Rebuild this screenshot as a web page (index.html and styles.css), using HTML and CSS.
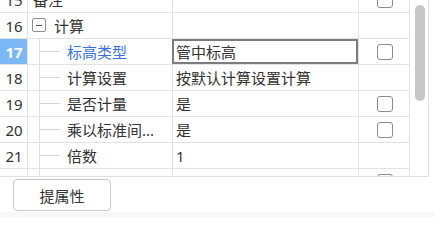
FILE: index.html
```html
<!DOCTYPE html>
<html>
<head>
<meta charset="utf-8">
<link rel="stylesheet" href="styles.css">
</head>
<body>
<div class="panel">
  <div class="grid">
    <div class="rows">
      <div class="row first">
        <div class="cell num">15</div>
        <div class="cell name top">备注</div>
        <div class="cell value"></div>
        <div class="cell check"><span class="box"></span></div>
      </div>
      <div class="row">
        <div class="cell num">16</div>
        <div class="cell name group"><span class="expander"><span class="minus"></span></span><span class="label">计算</span></div>
        <div class="cell value"></div>
        <div class="cell check"></div>
      </div>
      <div class="row selected">
        <div class="cell num">17</div>
        <div class="cell name child"><span class="indent"></span><span class="guide"></span><span class="conn"></span><span class="label">标高类型</span></div>
        <div class="cell value editing">管中标高</div>
        <div class="cell check"><span class="box"></span></div>
      </div>
      <div class="row">
        <div class="cell num">18</div>
        <div class="cell name child"><span class="indent"></span><span class="guide"></span><span class="conn"></span><span class="label">计算设置</span></div>
        <div class="cell value">按默认计算设置计算</div>
        <div class="cell check"></div>
      </div>
      <div class="row">
        <div class="cell num">19</div>
        <div class="cell name child"><span class="indent"></span><span class="guide"></span><span class="conn"></span><span class="label">是否计量</span></div>
        <div class="cell value">是</div>
        <div class="cell check"><span class="box"></span></div>
      </div>
      <div class="row">
        <div class="cell num">20</div>
        <div class="cell name child"><span class="indent"></span><span class="guide"></span><span class="conn"></span><span class="label">乘以标准间...</span></div>
        <div class="cell value">是</div>
        <div class="cell check"><span class="box"></span></div>
      </div>
      <div class="row">
        <div class="cell num">21</div>
        <div class="cell name child"><span class="indent"></span><span class="guide"></span><span class="conn"></span><span class="label">倍数</span></div>
        <div class="cell value">1</div>
        <div class="cell check"></div>
      </div>
      <div class="row">
        <div class="cell num"></div>
        <div class="cell name child"><span class="indent"></span><span class="guide"></span></div>
        <div class="cell value"></div>
        <div class="cell check top-box"><span class="box"></span></div>
      </div>
    </div>
    <div class="vscroll"><div class="thumb"></div></div>
  </div>
  <div class="footer"><button class="btn">提属性</button></div>
  <div class="strip"></div>
</div>
</body>
</html>
```

FILE: styles.css
```css
* { box-sizing: border-box; }
html, body { margin: 0; padding: 0; background: #ffffff; }
body {
  font-family: "Noto Sans", "Noto Sans CJK SC", sans-serif;
  font-size: 15px;
  color: #333333;
  width: 435px;
  height: 217px;
  overflow: hidden;
}
.panel { width: 435px; height: 217px; display: flex; flex-direction: column; }
.grid {
  width: 429px;
  height: 177px;
  display: flex;
  border-right: 1px solid #e0e0e0;
  border-bottom: 1px solid #e0e0e0;
  overflow: hidden;
}
.rows { width: 410px; display: flex; flex-direction: column; }
.row {
  display: flex;
  height: 26px;
  flex: 0 0 26px;
  border-bottom: 1px solid #e3e3e3;
}
.row.first { margin-top: -13px; }
.cell {
  height: 100%;
  border-right: 1px solid #e3e3e3;
  display: flex;
  align-items: center;
  line-height: 18px;
  white-space: nowrap;
  overflow: hidden;
}
.num { width: 28px; justify-content: center; padding-left: 1px; }
.name { width: 145px; align-items: stretch; }
.value { width: 186px; padding-left: 3px; }
.check { width: 51px; justify-content: center; padding-left: 1px; }
.check.top-box { align-items: flex-start; padding-top: 5px; }
.name.top { align-items: center; padding-left: 5px; }
.name.group { align-items: center; padding-left: 4px; }
.label { display: flex; align-items: center; }
.expander {
  width: 14px;
  height: 14px;
  border: 1px solid #8f8f8f;
  border-radius: 2px;
  display: flex;
  align-items: center;
  justify-content: center;
  margin-right: 8px;
  margin-top: -1px;
}
.minus { width: 6px; height: 1px; background: #555555; }
.indent { width: 11px; flex: 0 0 11px; }
.guide { width: 1px; flex: 0 0 1px; background: #e0e0e0; }
.conn { width: 20px; flex: 0 0 20px; height: 1px; align-self: center; background: #d6d6d6; margin-right: 7px; }
.selected .num { background: #7cb8f4; color: #ffffff; font-weight: bold; }
.selected .label { color: #3a70dc; }
.value.editing { box-shadow: inset 0 0 0 2px #7c7c7c; margin-left: -1px; width: 187px; padding-left: 4px; }
.box {
  width: 16px;
  height: 16px;
  flex: 0 0 16px;
  border: 1px solid #8c8c8c;
  border-radius: 3px;
  background: #ffffff;
}
.vscroll { width: 18px; flex: 0 0 18px; padding: 5px 0 0 5px; }
.thumb { width: 10px; height: 96px; border-radius: 5px; background: #c8c8c8; }
.footer { height: 35px; flex: 0 0 35px; padding: 2px 0 0 13px; }
.btn {
  width: 98px;
  height: 32px;
  border: 1px solid #c9c9c9;
  border-radius: 4px;
  background: #ffffff;
  font-family: "Noto Sans CJK SC", sans-serif;
  font-size: 15px;
  color: #333333;
  padding: 0;
}
.strip { flex: 1; background: #f7f7f7; }
```
